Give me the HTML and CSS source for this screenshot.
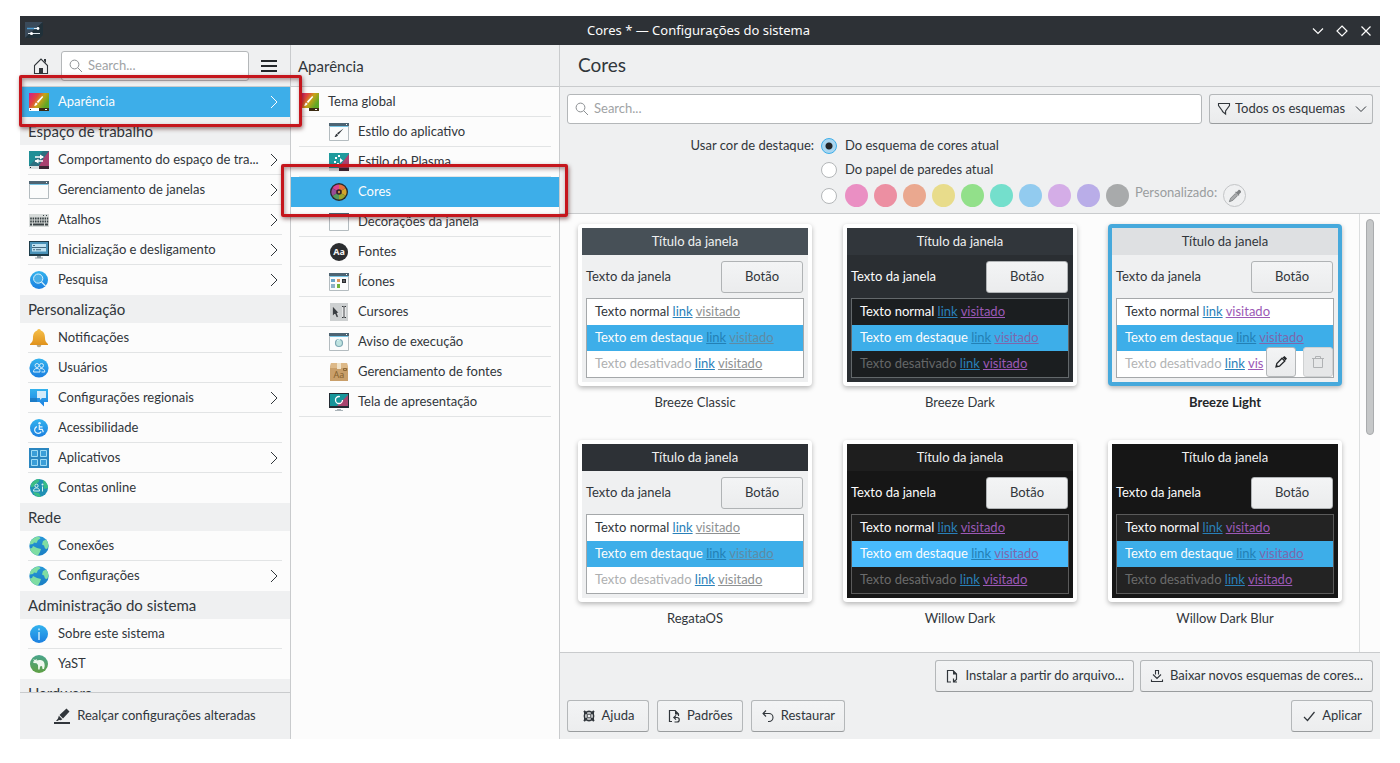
FILE: index.html
```html
<!DOCTYPE html>
<html lang="pt-BR">
<head>
<meta charset="utf-8">
<title>Cores — Configurações do sistema</title>
<link rel="stylesheet" href="styles.css">
</head>
<body>
<svg class="sprite" aria-hidden="true">
  <defs>
    <linearGradient id="g-rainbow" x1="0" y1="0" x2="1" y2="0.5"><stop offset="0" stop-color="#d2198c"/><stop offset=".4" stop-color="#e2483c"/><stop offset=".65" stop-color="#c9a318"/><stop offset="1" stop-color="#5fa827"/></linearGradient>
    <linearGradient id="g-blue" x1="0" y1="0" x2="0" y2="1"><stop offset="0" stop-color="#33b3ee"/><stop offset="1" stop-color="#1b7fe0"/></linearGradient>
    <linearGradient id="g-gold" x1="0" y1="0" x2="0" y2="1"><stop offset="0" stop-color="#f6c04a"/><stop offset="1" stop-color="#e0921c"/></linearGradient>
    <linearGradient id="g-green" x1="0" y1="0" x2="0" y2="1"><stop offset="0" stop-color="#4aa58c"/><stop offset="1" stop-color="#5fa044"/></linearGradient>
    <linearGradient id="g-globe" x1="0" y1="0" x2="0" y2="1"><stop offset="0" stop-color="#2596d8"/><stop offset="1" stop-color="#1a7fc4"/></linearGradient>
  </defs>
  <symbol id="i-look" viewBox="0 0 20 20"><path fill="url(#g-rainbow)" d="M0 1h20v15H0z"/><path fill="#fff" d="M0 16h10v3H0z"/><path fill="#3b2b12" d="M10 16h10v3H10z"/><path fill="#222" d="M1 17h1v1H1z"/><path fill="#fff" d="M16 17h2v1h-2zM13.200 4l1 1-5 6-1.500-1.300zM7 10.500l1.600 1.300c-.6 1.700-2 2.200-3.600 2 .9-.8.7-2.500 2-3.300z"/></symbol>
  <symbol id="i-plasma" viewBox="0 0 20 20"><path fill="#1f8f96" d="M0 1h20v15H0z"/><path fill="#2c6f80" d="M0 16L14 1h6v15z"/><path fill="#a9416f" d="M20 1v15H10l4-7z"/><path fill="#d9dee0" d="M0 16h10v3H0z"/><path fill="#3b2633" d="M10 16h10v3H10z"/><path fill="#222" d="M1 17h1v1H1z"/><path stroke="#fff" stroke-width="1.300" fill="none" d="M6 7h8M6 11h8"/><path fill="#fff" d="M11 4.500L15 7l-4 2.500zM9.500 8.700l-4 2.400 4 2.400z"/></symbol>
  <symbol id="i-plasma2" viewBox="0 0 20 20"><path fill="#1f9a9d" d="M0 1h20v15H0z"/><path fill="#b0426e" d="M20 2v14H9z"/><path fill="#d9dee0" d="M0 16h10v3H0z"/><path fill="#3b2633" d="M10 16h10v3H10z"/><path fill="#fff" d="M6 5h2v2H6zM5 9h2v2H5zM9 3h2v2H9zM11 6l3 2.500-3 2.500zM8 11h2v1H8z"/></symbol>
  <symbol id="i-win" viewBox="0 0 20 20"><path fill="#fbfcfc" stroke="#b4bcc0" d="M.5 1.500h19v17H.5z"/><path fill="#4d6473" d="M0 1h20v3H0z"/><path fill="#79c6e6" d="M1 4h18v1H1z"/><path fill="#fff" d="M17 2h1v1h-1z"/></symbol>
  <symbol id="i-winbrush" viewBox="0 0 20 20"><use href="#i-win"/><path fill="#31363b" d="M14.500 6.500l-5 6-1.500-1.200zM7.500 11.700l1.600 1.300c-.8 1.500-1.900 2-3.600 2 .9-.7.8-2.400 2-3.300z"/></symbol>
  <symbol id="i-keys" viewBox="0 0 20 20"><path fill="#d6dad9" d="M0 4h20v13H0z"/><path fill="none" stroke="#384144" stroke-width="2" stroke-dasharray="1.600 .8" d="M1.200 8.500h18M1.200 11.500h18"/><path fill="#384144" d="M1 13.500h2v2H1zM4 13.500h11v2H4zM16 13.500h3v2h-3zM14 5h1v1h-1zM17 5h1v1h-1z"/></symbol>
  <symbol id="i-screen" viewBox="0 0 20 20"><path fill="#1e3c4a" d="M0 1h20v15H0z"/><path fill="#4a92b8" d="M1 2h18v12H1z"/><path fill="#bfe2f2" d="M3 4h14v7.500H3z"/><path fill="#44687e" d="M3 7h14v1H3zM4 5h2v1H4zM4 9.300h2v1H4zM7 9.300h5v1H7z"/><path fill="#8f9a9f" d="M8 16h4v1.500H8zM6 17.500h8v1H6z"/></symbol>
  <symbol id="i-find" viewBox="0 0 20 20"><circle cx="10" cy="10" r="9" fill="url(#g-blue)"/><circle cx="9.200" cy="8.600" r="4.600" fill="#49aee6" stroke="#d8f0fb" stroke-width="1"/><path stroke="#d8f0fb" stroke-width="1.200" d="M12.500 12l4 4"/></symbol>
  <symbol id="i-bell" viewBox="0 0 20 20"><circle cx="10" cy="17" r="2.300" fill="#b6a98c"/><path fill="url(#g-gold)" d="M10 1c1.200 0 1.700.8 1.800 1.600C15.200 3.700 16 7 16 10c0 3 1 4 3 6v1H1v-1c2-2 3-3 3-6 0-3 .8-6.300 4.200-7.400C8.300 1.800 8.800 1 10 1z"/></symbol>
  <symbol id="i-users" viewBox="0 0 20 20"><circle cx="10" cy="10" r="9.600" fill="url(#g-blue)"/><g fill="none" stroke="#d4eefb"><circle cx="8" cy="7.500" r="2"/><circle cx="12.500" cy="7.500" r="2"/><path d="M4.500 14c0-2.500 1.500-3.500 3.500-3.500s3 1 3 3.500zM11 10.700c3-.6 4.800.8 4.800 3.300h-3.300"/></g></symbol>
  <symbol id="i-region" viewBox="0 0 20 20"><path fill="url(#g-blue)" d="M1 1h18v13h-4v4.500L10.500 14H1z"/><path fill="#1567a8" d="M1 10h7v4H1z" opacity=".5"/><path fill="#d4ecfa" d="M8 3h9v7h-4l-2 2v-2H8z"/></symbol>
  <symbol id="i-access" viewBox="0 0 20 20"><circle cx="10" cy="10" r="9" fill="url(#g-blue)"/><circle cx="10.500" cy="5.300" r="1.200" fill="#e3f4fd"/><path fill="none" stroke="#e3f4fd" stroke-width="1.200" d="M10.300 7v4.300h3l1 3M10.500 8.800h3M8 8.600a3.500 3.500 0 1 0 4.200 5"/></symbol>
  <symbol id="i-apps" viewBox="0 0 20 20"><path fill="#2a86c0" d="M0 0h20v20H0z"/><path fill="#3a9ed8" stroke="#9fdcf5" stroke-width="1" d="M2.500 2.500h6v6h-6zM11.500 2.500h6v6h-6zM2.500 11.500h6v6h-6zM11.500 11.500h6v6h-6z"/></symbol>
  <symbol id="i-contas" viewBox="0 0 20 20"><circle cx="10" cy="10" r="9" fill="#2090b4"/><path fill="#3bbd85" d="M2 6c2-3 5-5 8-5 1 2-1 4-3 5s-2 4-5 3zM14 2c3 1 5 5 5 8l-4 1zM4 14l6 1 2 4c-4 0-7-2-8-5z"/><g fill="none" stroke="#d4f2ee"><circle cx="7.500" cy="7.800" r="1.600"/><path d="M4.500 13c0-2 1.200-3 3-3s3 1 3 3zM13.500 8.500v5"/></g><circle cx="13.500" cy="6.500" r="1" fill="#d4f2ee"/></symbol>
  <symbol id="i-globe" viewBox="0 0 20 20"><circle cx="10" cy="10" r="9.700" fill="url(#g-globe)"/><path fill="#7fdda3" d="M2 4.500C4 2 6.500.6 10 .4l1.500 2L9 4 7.500 7 5 6.500 4 8 .6 8.500C.8 7 1.200 5.700 2 4.500zM14 5l3-1.500c1.500 1.700 2.600 4 2.600 6.500l-1.600 3-2-.5-1-3-2-1zM4 10l4 2 4 1-1 3-2 3.600C5 19 1.700 16 .8 12.500L3 12z"/></symbol>
  <symbol id="i-info" viewBox="0 0 20 20"><circle cx="10" cy="10" r="9" fill="url(#g-blue)"/><path fill="#d5effc" d="M9.300 4.500h1.400v1.700H9.300zM9.300 8h1.400v8H9.300z"/></symbol>
  <symbol id="i-yast" viewBox="0 0 20 20"><circle cx="10" cy="10" r="9" fill="url(#g-green)"/><path fill="#eef8ee" d="M4 5l2 1 2-1-.5 1.500C9 6 12 5.500 14 7c1.600 1.200 1.500 3 1.700 5L15 15h-1.500l-.5-3-2 .5-.4 3H9.200L9 11 7.500 9.200 4.500 9 4 7.500l1.500-.3z"/></symbol>
  <symbol id="i-wheel" viewBox="0 0 20 20"><circle cx="10" cy="10" r="9" fill="#2b2b2b"/><path fill="#d8448e" d="M10 10L3.500 6.200a7.500 7.500 0 0 1 6.500-3.700z"/><path fill="#e2703c" d="M10 10V2.500a7.500 7.500 0 0 1 6.500 3.700z"/><path fill="#d3a52c" d="M10 10l6.500-3.800a7.500 7.500 0 0 1 0 7.600z"/><path fill="#9aa52e" d="M10 10l6.500 3.800a7.500 7.500 0 0 1-6.500 3.700z"/><path fill="#559a5c" d="M10 10v7.500a7.500 7.500 0 0 1-6.500-3.700z"/><path fill="#9a4d96" d="M10 10l-6.500 3.800a7.500 7.500 0 0 1 0-7.600z"/><circle cx="10" cy="10" r="2.800" fill="#31202a"/><circle cx="10" cy="10" r="1.200" fill="#cf8a4a"/></symbol>
  <symbol id="i-icons" viewBox="0 0 20 20"><use href="#i-win"/><path fill="#6aa5c8" d="M2 7h4v3H2z"/><path fill="#e0955c" d="M8 7h3v3H8z"/><path fill="#2b2d30" d="M13 7h4v4h-4z"/><path fill="#8eb2c8" d="M2 12h4v4H2z"/><path fill="#72b43c" d="M8 12h3v4H8z"/><path fill="#fff" d="M14.500 8.500h1v1h-1z"/></symbol>
  <symbol id="i-cursor" viewBox="0 0 20 20"><path fill="#cdd0d1" d="M1 1h18v18H1z"/><path fill="#3a3e42" stroke="#f4f5f5" stroke-width=".5" d="M3.500 4l6.500 7H8l1.500 4-2 .6L6 12l-2.500 2z"/><path fill="none" stroke="#fff" stroke-width="3" d="M15 5v10"/><path fill="none" stroke="#33373a" d="M13 4.500h1l1 .8 1-.8h1M15 5.500v9M13 15.500h1l1-.8 1 .8h1"/></symbol>
  <symbol id="i-busy" viewBox="0 0 20 20"><use href="#i-win"/><circle cx="10" cy="11" r="3.500" fill="#bfe3e0" stroke="#7fa9b4" stroke-width="1.200"/><path stroke="#dff" d="M8 8.500l3-1"/></symbol>
  <symbol id="i-splash" viewBox="0 0 20 20"><path fill="#232b33" d="M0 1h20v15H0z"/><path fill="#17959a" d="M1 2h18v12H1z"/><path fill="#a8456f" d="M19 3v11H8z"/><circle cx="10" cy="8" r="3.500" fill="none" stroke="#fff" stroke-width="1.300" stroke-dasharray="17 5"/><path fill="#aab3b8" d="M8 17h4v1H8zM6 18h8v1H6z"/></symbol>
  <symbol id="i-chev" viewBox="0 0 8 14"><path fill="none" stroke="currentColor" d="M1 1l6 6-6 6"/></symbol>
  <symbol id="i-down" viewBox="0 0 12 8"><path fill="none" stroke="currentColor" d="M1 1.500l5 5 5-5"/></symbol>
  <symbol id="i-lens" viewBox="0 0 14 14"><circle cx="5.500" cy="5.500" r="4.400" fill="none" stroke="currentColor"/><path stroke="currentColor" d="M8.700 8.700l4.300 4.300"/></symbol>
  <symbol id="i-home" viewBox="0 0 16 16"><path fill="none" stroke="currentColor" stroke-width="1.100" d="M1.500 15.500V7.500L8 1l6.500 6.500v8z"/><path fill="currentColor" d="M6 10h4v6H6zM11 1h2v4l-2-2z"/></symbol>
  <symbol id="i-mark" viewBox="0 0 16 16"><path fill="currentColor" d="M0 14h16v2H0zM12.500 0.500L15.500 3.500 9 10.500 5.500 7zM4.800 7.700l3.500 3.500-1.500 1L5 12l-1.500 1H2l2-2.500z"/></symbol>
  <symbol id="i-filter" viewBox="0 0 14 14"><path fill="none" stroke="currentColor" stroke-width="1.100" d="M1.500 1.500h11v2L8.600 9v3L5.400 9.500V9L1.500 3.500z"/></symbol>
  <symbol id="i-picker" viewBox="0 0 16 16"><path fill="#808385" d="M12 1c1.500-.7 3.500 1.400 2.800 2.900L12.500 6l.6.800-1 1-4-4 1-1 .9.600z"/><path fill="#a9abad" stroke="#808385" d="M8.300 5.200L3 10.500 1.500 14.500 5.500 13l5.300-5.300z"/></symbol>
  <symbol id="i-pencil" viewBox="0 0 14 14"><path fill="none" stroke="currentColor" stroke-width="1.300" d="M2 12l.8-3.500L8 3.200l2.800 2.800-5.300 5.200z"/><path fill="currentColor" d="M8.500 2.500l2-1.500L13 3.500l-1.500 2zM2 12l.5-2.500L4.500 11.500z"/></symbol>
  <symbol id="i-trash" viewBox="0 0 14 14"><path fill="none" stroke="currentColor" d="M1 3.500h12M4.500 3V1.500h5V3M2.500 4v8.500h9V4"/></symbol>
  <symbol id="i-import" viewBox="0 0 14 14"><path fill="none" stroke="currentColor" stroke-width="1.200" d="M6 13H2.500V1.500H8L11.500 5v5.500L9 12.500M8.500 9.500v3.500h3.500"/><path fill="currentColor" d="M8 1v4.500h4z"/></symbol>
  <symbol id="i-get" viewBox="0 0 14 14"><path fill="none" stroke="currentColor" stroke-width="1.100" d="M5.500 5.500v-4h3v4M3 5.500l4 4 4-4M1.500 10.500v2h11v-2"/></symbol>
  <symbol id="i-help" viewBox="0 0 14 14"><circle cx="7" cy="7" r="4.600" fill="none" stroke="currentColor" stroke-width="1.600"/><circle cx="7" cy="7" r="2" fill="none" stroke="currentColor"/><path fill="none" stroke="currentColor" stroke-width="2" d="M2 2l3 3M12 2L9 5M2 12l3-3M12 12L9 9"/><path fill="none" stroke="currentColor" d="M2.500 3v8M11.500 3v8"/></symbol>
  <symbol id="i-defaults" viewBox="0 0 14 14"><path fill="none" stroke="currentColor" stroke-width="1.200" d="M5 12.500H2.500V1.500H8L11.500 5v2M7 8.500h3a2 2 0 0 1 0 4.500H7.500M9 6.300L6.800 8.500 9 10.700"/><path fill="currentColor" d="M8 1v4.500h4z"/></symbol>
  <symbol id="i-undo" viewBox="0 0 14 14"><path fill="none" stroke="currentColor" stroke-width="1.100" d="M5 1.500L2 4.500l3 3M2 4.500h6a4 4 0 0 1 0 8H7"/></symbol>
  <symbol id="i-ok" viewBox="0 0 14 14"><path fill="none" stroke="currentColor" stroke-width="1.200" d="M2 8l3.500 3.500L12.500 3"/></symbol>
</svg>

<div class="window">
  <header class="titlebar">
    <svg class="app-icon" viewBox="0 0 18 18"><path fill="#3a4a5a" d="M0 0h18L0 16z"/><path fill="#203039" d="M0 16L18 0v13l-3 3z"/><path stroke="#4a9bd0" stroke-width="1.500" d="M2 6.500h11"/><path stroke="#dfe8ee" d="M9 6.500h5M3 11.500h12"/><circle cx="13" cy="6.500" r="1.400" fill="#fff"/><circle cx="6.500" cy="11.500" r="1.600" fill="#fff"/></svg>
    <h1 class="window-title">Cores * — Configurações do sistema</h1>
    <div class="window-buttons">
      <button aria-label="Minimizar"><svg viewBox="0 0 12 12"><path d="M1 3.500l5 5 5-5"/></svg></button>
      <button aria-label="Maximizar"><svg viewBox="0 0 12 12"><path d="M6 1l5 5-5 5-5-5z"/></svg></button>
      <button aria-label="Fechar"><svg viewBox="0 0 12 12"><path d="M1.500 1.500l9 9M10.500 1.500l-9 9"/></svg></button>
    </div>
  </header>

  <div class="columns">
    <nav class="sidebar">
      <div class="bar sidebar-bar">
        <button class="tool" aria-label="Início"><svg class="ic16"><use href="#i-home"/></svg></button>
        <div class="search"><svg class="ic14"><use href="#i-lens"/></svg><input type="text" placeholder="Search..." aria-label="Pesquisar"></div>
        <button class="tool menu" aria-label="Menu"><span></span><span></span><span></span></button>
      </div>
      <div class="nav-scroll">
        <ul class="nav">
          <li><a class="item active" href="#"><svg class="ic20"><use href="#i-look"/></svg><span>Aparência</span><svg class="chev"><use href="#i-chev"/></svg></a></li>
        </ul>
        <h2 class="group">Espaço de trabalho</h2>
        <ul class="nav">
          <li><a class="item" href="#"><svg class="ic20"><use href="#i-plasma"/></svg><span>Comportamento do espaço de tra...</span><svg class="chev"><use href="#i-chev"/></svg></a></li>
          <li><a class="item" href="#"><svg class="ic20"><use href="#i-win"/></svg><span>Gerenciamento de janelas</span><svg class="chev"><use href="#i-chev"/></svg></a></li>
          <li><a class="item" href="#"><svg class="ic20"><use href="#i-keys"/></svg><span>Atalhos</span><svg class="chev"><use href="#i-chev"/></svg></a></li>
          <li><a class="item" href="#"><svg class="ic20"><use href="#i-screen"/></svg><span>Inicialização e desligamento</span><svg class="chev"><use href="#i-chev"/></svg></a></li>
          <li><a class="item" href="#"><svg class="ic20"><use href="#i-find"/></svg><span>Pesquisa</span><svg class="chev"><use href="#i-chev"/></svg></a></li>
        </ul>
        <h2 class="group">Personalização</h2>
        <ul class="nav">
          <li><a class="item" href="#"><svg class="ic20"><use href="#i-bell"/></svg><span>Notificações</span></a></li>
          <li><a class="item" href="#"><svg class="ic20"><use href="#i-users"/></svg><span>Usuários</span></a></li>
          <li><a class="item" href="#"><svg class="ic20"><use href="#i-region"/></svg><span>Configurações regionais</span><svg class="chev"><use href="#i-chev"/></svg></a></li>
          <li><a class="item" href="#"><svg class="ic20"><use href="#i-access"/></svg><span>Acessibilidade</span></a></li>
          <li><a class="item" href="#"><svg class="ic20"><use href="#i-apps"/></svg><span>Aplicativos</span><svg class="chev"><use href="#i-chev"/></svg></a></li>
          <li><a class="item" href="#"><svg class="ic20"><use href="#i-contas"/></svg><span>Contas online</span></a></li>
        </ul>
        <h2 class="group">Rede</h2>
        <ul class="nav">
          <li><a class="item" href="#"><svg class="ic20"><use href="#i-globe"/></svg><span>Conexões</span></a></li>
          <li><a class="item" href="#"><svg class="ic20"><use href="#i-globe"/></svg><span>Configurações</span><svg class="chev"><use href="#i-chev"/></svg></a></li>
        </ul>
        <h2 class="group">Administração do sistema</h2>
        <ul class="nav">
          <li><a class="item" href="#"><svg class="ic20"><use href="#i-info"/></svg><span>Sobre este sistema</span></a></li>
          <li><a class="item" href="#"><svg class="ic20"><use href="#i-yast"/></svg><span>YaST</span></a></li>
        </ul>
        <h2 class="group">Hardware</h2>
      </div>
      <button class="highlight-changed"><svg class="ic16"><use href="#i-mark"/></svg><span>Realçar configurações alteradas</span></button>
    </nav>

    <nav class="subnav">
      <div class="bar"><h2 class="bar-title">Aparência</h2></div>
      <ul class="nav">
        <li><a class="item" href="#"><svg class="ic20"><use href="#i-look"/></svg><span>Tema global</span></a></li>
        <li><a class="item child" href="#"><svg class="ic20"><use href="#i-winbrush"/></svg><span>Estilo do aplicativo</span></a></li>
        <li><a class="item child" href="#"><svg class="ic20"><use href="#i-plasma2"/></svg><span>Estilo do Plasma</span></a></li>
        <li><a class="item child active" href="#"><svg class="ic20"><use href="#i-wheel"/></svg><span>Cores</span></a></li>
        <li><a class="item child" href="#"><svg class="ic20"><use href="#i-win"/></svg><span>Decorações da janela</span></a></li>
        <li><a class="item child" href="#"><svg class="ic20" viewBox="0 0 20 20"><circle cx="10" cy="10" r="9" fill="#2b2d30"/><text x="10" y="13" class="glyph glyph-light">Aa</text></svg><span>Fontes</span></a></li>
        <li><a class="item child" href="#"><svg class="ic20"><use href="#i-icons"/></svg><span>Ícones</span></a></li>
        <li><a class="item child" href="#"><svg class="ic20"><use href="#i-cursor"/></svg><span>Cursores</span></a></li>
        <li><a class="item child" href="#"><svg class="ic20"><use href="#i-busy"/></svg><span>Aviso de execução</span></a></li>
        <li><a class="item child" href="#"><svg class="ic20" viewBox="0 0 20 20"><path fill="#c99f6a" d="M2 1h16l1 5v13H1V6z"/><path fill="#ddb988" d="M2 1h16l1 5H1z"/><path fill="#f0e2c8" d="M8 1h4v6H8z"/><text x="10" y="16" class="glyph glyph-brown">Aa</text><path fill="none" stroke="#8b6737" d="M14.500 6.500h3v2h-3z"/></svg><span>Gerenciamento de fontes</span></a></li>
        <li><a class="item child" href="#"><svg class="ic20"><use href="#i-splash"/></svg><span>Tela de apresentação</span></a></li>
      </ul>
    </nav>

    <main class="main">
      <div class="bar main-bar"><h2 class="page-title">Cores</h2></div>
      <div class="controls">
        <div class="filter-row">
          <div class="search"><svg class="ic14"><use href="#i-lens"/></svg><input type="text" placeholder="Search..." aria-label="Pesquisar esquemas"></div>
          <div class="select">
            <svg class="ic14"><use href="#i-filter"/></svg>
            <select aria-label="Filtro"><option>Todos os esquemas</option></select>
            <svg class="arrow"><use href="#i-down"/></svg>
          </div>
        </div>
        <div class="accent" role="radiogroup" aria-labelledby="accent-label">
          <span class="accent-label" id="accent-label">Usar cor de destaque:</span>
          <div class="accent-options">
            <label class="option"><input type="radio" name="accent" checked><span>Do esquema de cores atual</span></label>
            <label class="option"><input type="radio" name="accent"><span>Do papel de paredes atual</span></label>
            <div class="option swatches">
              <input type="radio" name="accent" aria-label="Personalizado">
              <button class="swatch pink" aria-label="Rosa"></button>
              <button class="swatch red" aria-label="Vermelho"></button>
              <button class="swatch orange" aria-label="Laranja"></button>
              <button class="swatch yellow" aria-label="Amarelo"></button>
              <button class="swatch green" aria-label="Verde"></button>
              <button class="swatch teal" aria-label="Turquesa"></button>
              <button class="swatch blue" aria-label="Azul"></button>
              <button class="swatch lilac" aria-label="Lilás"></button>
              <button class="swatch violet" aria-label="Violeta"></button>
              <button class="swatch gray" aria-label="Cinza"></button>
              <span class="custom">Personalizado:</span>
              <button class="swatch picker" aria-label="Escolher cor"><svg class="ic14"><use href="#i-picker"/></svg></button>
            </div>
          </div>
        </div>
      </div>

      <div class="gallery">
        <div class="schemes">
          <figure class="scheme classic">
            <div class="card"><div class="preview">
              <div class="p-title">Título da janela</div>
              <div class="p-window"><span>Texto da janela</span><button>Botão</button></div>
              <div class="p-view">
                <p>Texto normal <a href="#">link</a> <a class="visited" href="#">visitado</a></p>
                <p class="hl">Texto em destaque <a href="#">link</a> <a class="visited" href="#">visitado</a></p>
                <p class="off">Texto desativado <a href="#">link</a> <a class="visited" href="#">visitado</a></p>
              </div>
            </div></div>
            <figcaption>Breeze Classic</figcaption>
          </figure>
          <figure class="scheme dark">
            <div class="card"><div class="preview">
              <div class="p-title">Título da janela</div>
              <div class="p-window"><span>Texto da janela</span><button>Botão</button></div>
              <div class="p-view">
                <p>Texto normal <a href="#">link</a> <a class="visited" href="#">visitado</a></p>
                <p class="hl">Texto em destaque <a href="#">link</a> <a class="visited" href="#">visitado</a></p>
                <p class="off">Texto desativado <a href="#">link</a> <a class="visited" href="#">visitado</a></p>
              </div>
            </div></div>
            <figcaption>Breeze Dark</figcaption>
          </figure>
          <figure class="scheme light selected">
            <div class="card"><div class="preview">
              <div class="p-title">Título da janela</div>
              <div class="p-window"><span>Texto da janela</span><button>Botão</button></div>
              <div class="p-view">
                <p>Texto normal <a href="#">link</a> <a class="visited" href="#">visitado</a></p>
                <p class="hl">Texto em destaque <a href="#">link</a> <a class="visited" href="#">visitado</a></p>
                <p class="off">Texto desativado <a href="#">link</a> <a class="visited" href="#">vis</a></p>
              </div>
              <div class="card-actions">
                <button aria-label="Editar"><svg class="ic14"><use href="#i-pencil"/></svg></button>
                <button aria-label="Remover" disabled><svg class="ic14"><use href="#i-trash"/></svg></button>
              </div>
            </div></div>
            <figcaption>Breeze Light</figcaption>
          </figure>
          <figure class="scheme regata">
            <div class="card"><div class="preview">
              <div class="p-title">Título da janela</div>
              <div class="p-window"><span>Texto da janela</span><button>Botão</button></div>
              <div class="p-view">
                <p>Texto normal <a href="#">link</a> <a class="visited" href="#">visitado</a></p>
                <p class="hl">Texto em destaque <a href="#">link</a> <a class="visited" href="#">visitado</a></p>
                <p class="off">Texto desativado <a href="#">link</a> <a class="visited" href="#">visitado</a></p>
              </div>
            </div></div>
            <figcaption>RegataOS</figcaption>
          </figure>
          <figure class="scheme willow">
            <div class="card"><div class="preview">
              <div class="p-title">Título da janela</div>
              <div class="p-window"><span>Texto da janela</span><button>Botão</button></div>
              <div class="p-view">
                <p>Texto normal <a href="#">link</a> <a class="visited" href="#">visitado</a></p>
                <p class="hl">Texto em destaque <a href="#">link</a> <a class="visited" href="#">visitado</a></p>
                <p class="off">Texto desativado <a href="#">link</a> <a class="visited" href="#">visitado</a></p>
              </div>
            </div></div>
            <figcaption>Willow Dark</figcaption>
          </figure>
          <figure class="scheme blur">
            <div class="card"><div class="preview">
              <div class="p-title">Título da janela</div>
              <div class="p-window"><span>Texto da janela</span><button>Botão</button></div>
              <div class="p-view">
                <p>Texto normal <a href="#">link</a> <a class="visited" href="#">visitado</a></p>
                <p class="hl">Texto em destaque <a href="#">link</a> <a class="visited" href="#">visitado</a></p>
                <p class="off">Texto desativado <a href="#">link</a> <a class="visited" href="#">visitado</a></p>
              </div>
            </div></div>
            <figcaption>Willow Dark Blur</figcaption>
          </figure>
        </div>
        <div class="scrollbar"><div class="thumb"></div></div>
      </div>

      <footer class="footer">
        <div class="footer-row end">
          <button class="btn"><svg class="ic14"><use href="#i-import"/></svg><span>Instalar a partir do arquivo...</span></button>
          <button class="btn"><svg class="ic14"><use href="#i-get"/></svg><span>Baixar novos esquemas de cores...</span></button>
        </div>
        <div class="footer-row">
          <button class="btn"><svg class="ic14"><use href="#i-help"/></svg><span>Ajuda</span></button>
          <button class="btn"><svg class="ic14"><use href="#i-defaults"/></svg><span>Padrões</span></button>
          <button class="btn"><svg class="ic14"><use href="#i-undo"/></svg><span>Restaurar</span></button>
          <button class="btn push"><svg class="ic14"><use href="#i-ok"/></svg><span>Aplicar</span></button>
        </div>
      </footer>
    </main>
  </div>
  <div class="callout callout-first"></div>
  <div class="callout callout-second"></div>
</div>
</body>
</html>
```
FILE: styles.css
```css
*, *::before, *::after { box-sizing: border-box; }

:root {
  --text: #31363b;
  --panel: #eff0f1;
  --view: #fcfcfc;
  --line: #c9cbcd;
  --accent: #3daee9;
  --control: #b4b7b9;
}

body {
  margin: 0;
  padding: 16px 20px 24px;
  height: 100vh;
  background: #fff;
  color: var(--text);
  font: 13px/18px Lato, "Noto Sans", sans-serif;
}

h1, h2, p, ul, figure { margin: 0; padding: 0; font-weight: 400; }
ul { list-style: none; }
svg { display: block; flex: none; }
button, input, select { font: inherit; color: inherit; margin: 0; }
button { padding: 0; border: 0; background: none; }
a { color: inherit; }

.sprite { position: absolute; width: 0; height: 0; }
.glyph { font: 700 9px "Noto Sans", sans-serif; text-anchor: middle; }
.glyph-light { fill: #f2f2f2; }
.glyph-brown { fill: #85612f; font-weight: 400; }

.ic14 { width: 14px; height: 14px; }
.ic16 { width: 16px; height: 16px; }
.ic20 { width: 20px; height: 20px; }

.window { position: relative; display: flex; flex-direction: column; height: 100%; background: var(--panel); }

.titlebar { display: grid; grid-template-columns: 1fr auto 1fr; align-items: center; height: 29px; flex: none; padding: 0 8px 0 5px; background: #2d3136; color: #fcfcfc; }
.app-icon { width: 18px; height: 18px; }
.window-title { padding-bottom: 1px; font-family: "Noto Sans", sans-serif; font-size: 13px; }
.window-buttons { display: flex; justify-content: flex-end; gap: 12px; }
.window-buttons svg { width: 12px; height: 12px; fill: none; stroke: #fcfcfc; stroke-width: 1.2; }

.columns { display: grid; grid-template-columns: 271px 269px 1fr; flex: 1; min-height: 0; }
.sidebar, .subnav { display: flex; flex-direction: column; min-height: 0; border-right: 1px solid var(--line); }
.subnav { background: var(--view); }
.main { display: flex; flex-direction: column; min-width: 0; min-height: 0; }

.bar { display: flex; align-items: center; flex: none; height: 42px; border-bottom: 1px solid var(--line); background: var(--panel); padding: 0 7px; }
.bar-title { font-size: 15px; line-height: 20px; }
.main-bar { padding: 0 18px; }
.page-title { padding-bottom: 2px; font-size: 19px; line-height: 24px; }

.sidebar-bar { gap: 12px; padding: 0 13px; }
.menu { display: grid; gap: 3px; width: 16px; }
.menu span { height: 2px; background: #232629; }

.search { display: flex; align-items: center; gap: 5px; flex: 1; min-width: 0; height: 30px; padding: 0 7px; border: 1px solid var(--control); border-radius: 3px; background: #fff; color: #8b8f92; }
.search input { flex: 1; min-width: 0; padding: 0 0 2px; border: 0; outline: 0; background: none; }
.search input::placeholder { color: #a0a3a5; opacity: 1; }

.nav-scroll { flex: 1; min-height: 0; overflow: hidden; background: var(--view); }
.item { position: relative; display: flex; align-items: center; gap: 9px; height: 30px; padding: 0 12px 0 9px; white-space: nowrap; text-decoration: none; }
.item span { flex: 1; min-width: 0; }
.item span, .btn span, .option span, .highlight-changed span, .p-window span { padding-bottom: 2px; }
.item::after { content: ""; position: absolute; left: 8px; right: 8px; bottom: 0; height: 1px; background: #e2e4e5; }
.nav li:last-child .item::after, .item.active::after { display: none; }
.subnav .nav li:last-child .item::after { display: block; }
.subnav .item { padding-left: 8px; }
.subnav .child { padding-left: 38px; }
.item.active { background: var(--accent); color: #fcfcfc; }
.chev { width: 8px; height: 14px; }

.group { height: 28px; padding: 0 8px; background: var(--panel); font-size: 15px; line-height: 28px; }

.highlight-changed { display: flex; align-items: center; justify-content: center; gap: 7px; flex: none; height: 47px; border-top: 1px solid var(--line); }

.controls { flex: none; padding: 7px 7px 4px; border-bottom: 1px solid var(--line); }
.filter-row { display: flex; gap: 7px; }
.select { display: grid; grid-template-columns: 26px 1fr 22px; align-items: center; width: 164px; height: 30px; border: 1px solid var(--control); border-bottom-color: #999c9e; border-radius: 3px; background: linear-gradient(#f3f4f5, #eaebec); }
.select svg, .select select { grid-row: 1; }
.select .ic14 { grid-column: 1; margin-left: 7px; }
.select select { grid-column: 1 / -1; width: 100%; height: 28px; padding: 0 0 2px 25px; border: 0; background: none; appearance: none; }
.select .arrow { grid-column: 3; width: 12px; height: 8px; margin-left: 5px; }

.accent { display: grid; grid-template-columns: 247px 1fr; column-gap: 7px; padding-top: 10px; }
.accent-label { text-align: right; line-height: 22px; white-space: nowrap; }
.option { display: flex; align-items: center; gap: 8px; height: 24px; }
.option input { appearance: none; flex: none; width: 16px; height: 16px; border: 1px solid var(--control); border-radius: 50%; background: #fff; }
.option input:checked { border-color: var(--accent); background: radial-gradient(circle, #232629 3px, #a9d6f0 4px); }
.swatches { gap: 6px; height: 27px; }
.swatches input { margin-right: 2px; }
.swatch { flex: none; width: 23px; height: 23px; border-radius: 50%; }
.pink { background: #ea8fc3; }
.red { background: #ec8fa2; }
.orange { background: #eaa88f; }
.yellow { background: #e8dc8b; }
.green { background: #92e08a; }
.teal { background: #74dfcc; }
.blue { background: #92cbef; }
.lilac { background: #d4ade7; }
.violet { background: #b9ade8; }
.gray { background: #a8aaab; }
.custom { color: #9a9d9f; line-height: 20px; align-self: flex-start; }
.picker { display: grid; place-items: center; border: 1px solid #c3c5c7; }

.gallery { display: flex; flex: 1; min-height: 0; background: var(--view); }
.schemes { display: grid; grid-template-columns: repeat(3, 1fr); grid-auto-rows: 216px; flex: 1; overflow: hidden; padding: 10px 2px 0; }
.scheme { padding: 0 15px 0 16px; text-align: center; }
.scheme figcaption { padding-top: 7px; line-height: 18px; }
.selected figcaption { font-weight: 700; color: #232629; }
.card { padding: 4px; border-radius: 4px; background: #fff; box-shadow: 0 2px 5px rgba(0, 0, 0, .28); }
.selected .card { background: #46a9dc; }
.preview { position: relative; height: 154px; background: var(--bg); color: var(--fg); text-align: left; }
.p-title { height: 27px; background: var(--title); color: var(--title-fg); line-height: 26px; text-align: center; }
.p-window { display: flex; align-items: center; justify-content: space-between; height: 43px; padding: 0 5px 0 4px; }
.p-window button { width: 82px; height: 32px; padding-bottom: 2px; border: 1px solid #b0b3b5; border-radius: 3px; background: linear-gradient(#f3f4f5, #ebeced); color: #31363b; }
.p-view { margin: 0 4px; border: 1px solid var(--frame); background: var(--view-bg); }
.p-view p { height: 26px; padding-left: 8px; line-height: 24px; white-space: nowrap; }
.p-view a { color: var(--link); }
.p-view .visited { color: var(--visited); }
.p-view .hl { background: var(--hl); color: #fcfcfc; }
.p-view .off { color: var(--off); }
.p-view .hl a { color: #2380b5; }
.p-view .hl .visited { color: var(--hl-visited); }

.scheme { --hl: #3daee9; --link: #2980b9; --visited: #9b59b6; --hl-visited: #7d67ac; }
.classic { --title: #475057; --title-fg: #eff0f1; --bg: #eff0f1; --fg: #31363b; --view-bg: #fff; --frame: #a5a8aa; --off: #aeb0b1; --visited: #8e9192; --hl-visited: #5e8ba5; }
.dark { --title: #31363b; --title-fg: #eff0f1; --bg: #2a2e32; --fg: #fcfcfc; --view-bg: #1b1e20; --frame: #63686b; --off: #656768; }
.light { --title: #dee0e2; --title-fg: #31363b; --bg: #eff0f1; --fg: #31363b; --view-bg: #fff; --frame: #a5a8aa; --off: #b2b4b5; }
.regata { --title: #2d3136; --title-fg: #eff0f1; --bg: #eff0f1; --fg: #31363b; --view-bg: #fff; --frame: #a5a8aa; --off: #aeb0b1; --visited: #8e9192; --hl-visited: #5e8ba5; }
.willow { --title: #1e1e1e; --title-fg: #eff0f1; --bg: #161616; --fg: #fcfcfc; --view-bg: #1e1e1e; --frame: #5a5a5a; --off: #6b6b6b; --hl: #48bafc; }
.blur { --title: #161616; --title-fg: #eff0f1; --bg: #161616; --fg: #fcfcfc; --view-bg: #232323; --frame: #5a5a5a; --off: #6b6b6b; }

.card-actions { position: absolute; right: 5px; bottom: 5px; display: flex; gap: 7px; }
.card-actions button { display: grid; place-items: center; width: 30px; height: 30px; border: 1px solid #b4b7b9; border-radius: 3px; background: linear-gradient(#f3f4f5, #eaebec); color: #232629; }
.card-actions button:disabled { border-color: #cfd1d2; background: #e6e7e8; color: #b0b2b4; }

.scrollbar { flex: none; width: 21px; padding: 5px 6px; border-left: 1px solid #dcdedf; }
.thumb { width: 8px; height: 216px; border: 1px solid #a9abad; border-radius: 4px; background: #c5c7c8; }

.footer { display: grid; gap: 8px; flex: none; padding: 7px; border-top: 1px solid var(--line); }
.footer-row { display: flex; gap: 8px; }
.end { justify-content: flex-end; gap: 6px; }
.btn { display: flex; align-items: center; justify-content: center; gap: 6px; min-width: 82px; height: 32px; padding: 0 9px; border: 1px solid var(--control); border-bottom-color: #999c9e; border-radius: 3px; background: linear-gradient(#f3f4f5, #ecedee); white-space: nowrap; }
.push { margin-left: auto; }

.callout { position: absolute; border: 3px solid #c5161d; border-radius: 2px; box-shadow: 1px 2px 4px rgba(60, 0, 0, .5), inset 1px 2px 4px rgba(60, 0, 0, .4); pointer-events: none; }
.callout-first { left: -1px; top: 59px; width: 283px; height: 52px; }
.callout-second { left: 261px; top: 148px; width: 287px; height: 53px; }
```
